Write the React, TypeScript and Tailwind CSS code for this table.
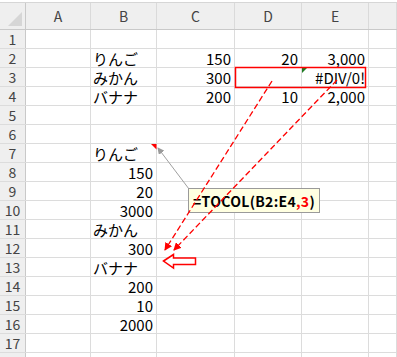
import React from 'react';

type Cell = { text: string; align?: 'left' | 'right' };

const COLS = ['A', 'B', 'C', 'D', 'E', ''];
const COL_W = ['w-[26px]', 'w-[65px]', 'w-[66px]', 'w-[78px]', 'w-[67px]', 'w-[67px]', 'flex-1'];

const L = (text: string): Cell => ({ text, align: 'left' });
const R = (text: string): Cell => ({ text, align: 'right' });

// row number -> cells for A..F
const data: Record<number, (Cell | null)[]> = {
  2: [null, L('りんご'), R('150'), R('20'), R('3,000'), null],
  3: [null, L('みかん'), R('300'), null, R('#DIV/0!'), null],
  4: [null, L('バナナ'), R('200'), R('10'), R('2,000'), null],
  7: [null, L('りんご'), null, null, null, null],
  8: [null, R('150'), null, null, null, null],
  9: [null, R('20'), null, null, null, null],
  10: [null, R('3000'), null, null, null, null],
  11: [null, L('みかん'), null, null, null, null],
  12: [null, R('300'), null, null, null, null],
  13: [null, L('バナナ'), null, null, null, null],
  14: [null, R('200'), null, null, null, null],
  15: [null, R('10'), null, null, null, null],
  16: [null, R('2000'), null, null, null, null],
};

const rows = Array.from({ length: 18 }, (_, i) => i + 1);

const App: React.FC = () => {
  return (
    <div
      className="relative w-[397px] h-[357px] overflow-hidden bg-white text-[15px] text-black"
      style={{ fontFamily: '"Noto Sans CJK JP", "Noto Sans", sans-serif' }}
    >
      <div className="h-[3px] border-b border-[#d6d6d6] bg-white" />

      {/* column headers */}
      <div className="flex h-[27px] bg-[#efefef] border-b border-[#c9c9c9]">
        <div className={`${COL_W[0]} shrink-0 border-r border-[#c9c9c9] relative`}>
          <svg className="absolute right-[3px] bottom-[3px]" width="14" height="14">
            <polygon points="14,0 14,14 0,14" fill="#d6d6d6" />
          </svg>
        </div>
        {COLS.map((c, i) => (
          <div
            key={i}
            className={`${COL_W[i + 1]} shrink-0 border-r border-[#dadada] flex items-center justify-center text-[14px] text-[#444]`}
          >
            {c}
          </div>
        ))}
      </div>

      {rows.map((r) => (
        <div key={r} className="flex h-[19px] border-b border-[#dcdcdc]">
          <div
            className={`${COL_W[0]} shrink-0 bg-[#efefef] border-r border-[#c9c9c9] flex items-center justify-center text-[14px] text-[#444]`}
          >
            {r}
          </div>
          {COLS.map((_, i) => {
            const cell = data[r]?.[i];
            return (
              <div
                key={i}
                className={`${COL_W[i + 1]} shrink-0 border-r border-[#dcdcdc] flex items-center px-[2px] leading-none whitespace-nowrap ${
                  cell?.align === 'right' ? 'justify-end pr-[3px]' : 'justify-start'
                }`}
              >
                {cell?.text}
              </div>
            );
          })}
        </div>
      ))}

      {/* comment box (lines are drawn over it) */}
      <div
        className="absolute left-[188px] top-[188px] w-[132px] h-[25px] bg-[#ffffe1] border border-[#9a9a9a] flex items-center justify-center text-[14px] tracking-[0.3px] font-bold leading-none"
        style={{ fontFamily: '"Noto Sans CJK JP", "Noto Sans", sans-serif' }}
      >
        <span>=TOCOL(B2:E4</span>
        <span className="text-[#ff0000]">,3</span>
        <span>)</span>
      </div>

      {/* annotations */}
      <svg className="absolute left-0 top-0 pointer-events-none" width="397" height="357">
        <defs>
          <marker id="redHead" markerWidth="8" markerHeight="8" refX="7" refY="4" orient="auto" markerUnits="userSpaceOnUse">
            <polygon points="0,0 8,4 0,8" fill="#ff0000" />
          </marker>
          <marker id="grayHead" markerWidth="7" markerHeight="7" refX="6" refY="3.5" orient="auto" markerUnits="userSpaceOnUse">
            <polygon points="0,0 7,3.5 0,7" fill="#9a9a9a" />
          </marker>
        </defs>
        {/* error indicator */}
        <polygon points="302,68 307,68 302,73" fill="#1e7b22" />
        {/* red frame D3:E3 */}
        <rect x="235.5" y="67.5" width="130" height="20" fill="none" stroke="#ff0000" strokeWidth="1.5" />
        {/* dashed arrows */}
        <line x1="272" y1="81" x2="165" y2="250" stroke="#ff0000" strokeWidth="1.3" strokeDasharray="6 3" markerEnd="url(#redHead)" />
        <line x1="337" y1="80" x2="174" y2="250" stroke="#ff0000" strokeWidth="1.3" strokeDasharray="6 3" markerEnd="url(#redHead)" />
        {/* comment indicator + leader */}
        <polygon points="151,144 156.5,144 156.5,149.5" fill="#ff0000" />
        <line x1="189" y1="189" x2="158" y2="148" stroke="#a0a0a0" strokeWidth="1" markerEnd="url(#grayHead)" />
        {/* hollow left arrow */}
        <polygon
          points="163.5,261 173.5,254.5 173.5,258 195.5,258 195.5,264.5 173.5,264.5 173.5,268"
          fill="white"
          stroke="#ff0000"
          strokeWidth="1.5"
        />
      </svg>
    </div>
  );
};

export default App;
